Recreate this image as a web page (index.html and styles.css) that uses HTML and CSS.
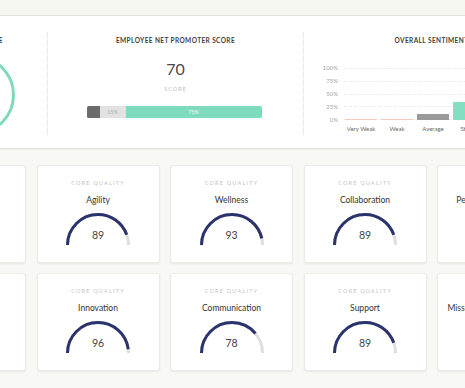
FILE: index.html
```html
<!DOCTYPE html>
<html lang="en">
<head>
<meta charset="utf-8">
<title>Culture Dashboard</title>
<link rel="stylesheet" href="styles.css">
</head>
<body>
<div class="topbar"></div>
<section class="summary">
  <div class="summary-inner">
    <div class="col col-score">
      <h3 class="col-title col-title-score">ENGAGEMENT SCORE</h3>
      <div class="ring"><span class="ring-value">82</span></div>
    </div>
    <div class="col col-nps">
      <h3 class="col-title">EMPLOYEE NET PROMOTER SCORE</h3>
      <div class="nps-value">70</div>
      <div class="nps-label">SCORE</div>
      <div class="nps-bar">
        <div class="seg seg-det" style="width:7.5%"></div>
        <div class="seg seg-pas" style="width:15%">15%</div>
        <div class="seg seg-pro" style="width:77.5%">75%</div>
      </div>
    </div>
    <div class="col col-sent">
      <h3 class="col-title">OVERALL SENTIMENT</h3>
      <div class="chart">
        <div class="y-axis">
          <span>100%</span><span>75%</span><span>50%</span><span>25%</span><span>0%</span>
        </div>
        <div class="plot-wrap">
          <div class="plot">
            <div class="gridlines"><i></i><i></i><i></i><i></i><i></i></div>
            <div class="bars">
              <div class="bar bar-weak" style="height:2%"></div>
              <div class="bar bar-weak" style="height:2%"></div>
              <div class="bar bar-avg" style="height:11%"></div>
              <div class="bar bar-strong" style="height:35%"></div>
              <div class="bar bar-strong" style="height:52%"></div>
            </div>
          </div>
          <div class="x-axis">
            <span>Very Weak</span><span>Weak</span><span>Average</span><span>Strong</span><span>Very Strong</span>
          </div>
        </div>
      </div>
    </div>
  </div>
</section>
<section class="qualities">
  <div class="card-row">
    <div class="card"><div class="kicker">CORE QUALITY</div><div class="card-title">Trust</div>
      <div class="gauge"><svg viewBox="0 0 66 33" width="66" height="33"><path class="g-track" d="M2.5,33 A30.5,30.5 0 0 1 63.5,33"/><path class="g-val" pathLength="100" stroke-dasharray="91 200" d="M2.5,33 A30.5,30.5 0 0 1 63.5,33"/></svg><span class="g-num">91</span></div></div>
    <div class="card"><div class="kicker">CORE QUALITY</div><div class="card-title">Agility</div>
      <div class="gauge"><svg viewBox="0 0 66 33" width="66" height="33"><path class="g-track" d="M2.5,33 A30.5,30.5 0 0 1 63.5,33"/><path class="g-val" pathLength="100" stroke-dasharray="89 200" d="M2.5,33 A30.5,30.5 0 0 1 63.5,33"/></svg><span class="g-num">89</span></div></div>
    <div class="card"><div class="kicker">CORE QUALITY</div><div class="card-title">Wellness</div>
      <div class="gauge"><svg viewBox="0 0 66 33" width="66" height="33"><path class="g-track" d="M2.5,33 A30.5,30.5 0 0 1 63.5,33"/><path class="g-val" pathLength="100" stroke-dasharray="93 200" d="M2.5,33 A30.5,30.5 0 0 1 63.5,33"/></svg><span class="g-num">93</span></div></div>
    <div class="card"><div class="kicker">CORE QUALITY</div><div class="card-title">Collaboration</div>
      <div class="gauge"><svg viewBox="0 0 66 33" width="66" height="33"><path class="g-track" d="M2.5,33 A30.5,30.5 0 0 1 63.5,33"/><path class="g-val" pathLength="100" stroke-dasharray="89 200" d="M2.5,33 A30.5,30.5 0 0 1 63.5,33"/></svg><span class="g-num">89</span></div></div>
    <div class="card"><div class="kicker">CORE QUALITY</div><div class="card-title">Personal Development</div>
      <div class="gauge"><svg viewBox="0 0 66 33" width="66" height="33"><path class="g-track" d="M2.5,33 A30.5,30.5 0 0 1 63.5,33"/><path class="g-val" pathLength="100" stroke-dasharray="85 200" d="M2.5,33 A30.5,30.5 0 0 1 63.5,33"/></svg><span class="g-num">85</span></div></div>
  </div>
  <div class="card-row">
    <div class="card"><div class="kicker">CORE QUALITY</div><div class="card-title">Respect</div>
      <div class="gauge"><svg viewBox="0 0 66 33" width="66" height="33"><path class="g-track" d="M2.5,33 A30.5,30.5 0 0 1 63.5,33"/><path class="g-val" pathLength="100" stroke-dasharray="90 200" d="M2.5,33 A30.5,30.5 0 0 1 63.5,33"/></svg><span class="g-num">90</span></div></div>
    <div class="card"><div class="kicker">CORE QUALITY</div><div class="card-title">Innovation</div>
      <div class="gauge"><svg viewBox="0 0 66 33" width="66" height="33"><path class="g-track" d="M2.5,33 A30.5,30.5 0 0 1 63.5,33"/><path class="g-val" pathLength="100" stroke-dasharray="96 200" d="M2.5,33 A30.5,30.5 0 0 1 63.5,33"/></svg><span class="g-num">96</span></div></div>
    <div class="card"><div class="kicker">CORE QUALITY</div><div class="card-title">Communication</div>
      <div class="gauge"><svg viewBox="0 0 66 33" width="66" height="33"><path class="g-track" d="M2.5,33 A30.5,30.5 0 0 1 63.5,33"/><path class="g-val" pathLength="100" stroke-dasharray="78 200" d="M2.5,33 A30.5,30.5 0 0 1 63.5,33"/></svg><span class="g-num">78</span></div></div>
    <div class="card"><div class="kicker">CORE QUALITY</div><div class="card-title">Support</div>
      <div class="gauge"><svg viewBox="0 0 66 33" width="66" height="33"><path class="g-track" d="M2.5,33 A30.5,30.5 0 0 1 63.5,33"/><path class="g-val" pathLength="100" stroke-dasharray="89 200" d="M2.5,33 A30.5,30.5 0 0 1 63.5,33"/></svg><span class="g-num">89</span></div></div>
    <div class="card"><div class="kicker">CORE QUALITY</div><div class="card-title">Mission &amp; Vision Alignment</div>
      <div class="gauge"><svg viewBox="0 0 66 33" width="66" height="33"><path class="g-track" d="M2.5,33 A30.5,30.5 0 0 1 63.5,33"/><path class="g-val" pathLength="100" stroke-dasharray="87 200" d="M2.5,33 A30.5,30.5 0 0 1 63.5,33"/></svg><span class="g-num">87</span></div></div>
  </div>
</section>
</body>
</html>
```

FILE: styles.css
```css
html, body {
  margin: 0;
  padding: 0;
}
body {
  background: #f8f8f4;
  font-family: Lato, "Open Sans", "Liberation Sans", sans-serif;
  color: #444;
  overflow: hidden;
  width: 465px;
  height: 388px;
}
.topbar {
  height: 15px;
  background: #f7f7f2;
}
.summary {
  background: #fff;
  border-top: 1px solid #e4e4df;
  border-bottom: 1px solid #e2e2dd;
  box-shadow: 0 1px 1px rgba(0,0,0,0.04);
  height: 134px;
  box-sizing: border-box;
  overflow: hidden;
}
.summary-inner {
  display: flex;
  margin-left: -101px;
  padding-top: 16px;
}
.col {
  flex: none;
  height: 103px;
  box-sizing: border-box;
  display: flex;
  flex-direction: column;
  align-items: center;
  padding-top: 5px;
}
.col-score {
  width: 148px;
}
.col-nps, .col-sent {
  width: 256px;
  border-left: 1px dotted #dedede;
}
.col-title {
  margin: 0;
  font-size: 6.5px;
  line-height: 8px;
  font-weight: 700;
  letter-spacing: 0.4px;
  color: #3e3e3e;
  white-space: nowrap;
}
.col-title-score {
  margin-right: 14px;
}
.ring {
  margin-top: 10px;
  margin-left: 4px;
  width: 80px;
  height: 80px;
  box-sizing: border-box;
  border: 3.5px solid #7ed9bd;
  border-radius: 50%;
  display: flex;
  align-items: center;
  justify-content: center;
}
.ring-value {
  font-size: 18px;
  color: #444;
}
.nps-value {
  margin-top: 15px;
  font-size: 16px;
  line-height: 18px;
  color: #4a4a4a;
}
.nps-label {
  margin-top: 7px;
  font-size: 5.5px;
  line-height: 8px;
  letter-spacing: 1px;
  color: #bdbdbd;
}
.nps-bar {
  margin-top: 13px;
  margin-left: -3px;
  width: 175px;
  height: 12px;
  display: flex;
  border-radius: 1.5px;
  overflow: hidden;
}
.seg {
  height: 100%;
  display: flex;
  align-items: center;
  justify-content: center;
  font-size: 5px;
  letter-spacing: 0.3px;
}
.seg-det { background: #6c6c6c; }
.seg-pas { background: #e2e2e2; color: #a9a9a9; }
.seg-pro { background: #7edbbd; color: #fff; }

.chart {
  align-self: flex-start;
  margin-left: 16px;
  margin-top: 23px;
  display: flex;
}
.y-axis {
  width: 18px;
  height: 60px;
  margin-top: -4px;
  display: flex;
  flex-direction: column;
  justify-content: space-between;
  align-items: flex-end;
  font-size: 6px;
  line-height: 8px;
  color: #a5a5a5;
}
.plot-wrap {
  margin-left: 6px;
  width: 182px;
}
.plot {
  position: relative;
  height: 52px;
}
.gridlines {
  position: absolute;
  inset: 0;
  display: flex;
  flex-direction: column;
  justify-content: space-between;
}
.gridlines i {
  display: block;
  height: 0;
  border-top: 1px dashed #ebebeb;
}
.bars {
  position: relative;
  height: 100%;
  display: flex;
  align-items: flex-end;
  gap: 4px;
  padding-left: 1px;
}
.bar {
  width: 32px;
  flex: none;
}
.bar-weak { background: #f3c9c0; height: 1px; }
.bar-avg { background: #9a9a9a; }
.bar-strong { background: #82dfc2; }
.x-axis {
  display: flex;
  gap: 4px;
  padding-left: 1px;
  margin-top: 5px;
}
.x-axis span {
  width: 32px;
  flex: none;
  text-align: center;
  white-space: nowrap;
  font-size: 6px;
  line-height: 8px;
  color: #666;
}

.qualities {
  padding-top: 16px;
  display: flex;
  flex-direction: column;
  gap: 10px;
}
.card-row {
  display: flex;
  gap: 10.5px;
  margin-left: -97px;
}
.card {
  flex: none;
  width: 123px;
  height: 98px;
  box-sizing: border-box;
  background: #fff;
  border: 1px solid #ebebe9;
  border-radius: 3px;
  box-shadow: 0 1px 2px rgba(0,0,0,0.07);
  display: flex;
  flex-direction: column;
  align-items: center;
  padding-top: 13px;
}
.kicker {
  font-size: 5.5px;
  line-height: 8px;
  letter-spacing: 1.2px;
  color: #c4c4c4;
  white-space: nowrap;
}
.card-title {
  margin-top: 9px;
  font-size: 8.5px;
  line-height: 9px;
  color: #333;
  white-space: nowrap;
}
.gauge {
  margin-top: 7px;
  display: grid;
  width: 66px;
  height: 33px;
}
.gauge svg, .g-num {
  grid-area: 1 / 1;
}
.gauge svg { display: block; }
.g-track {
  fill: none;
  stroke: #dedede;
  stroke-width: 3;
}
.g-val {
  fill: none;
  stroke: #2b336e;
  stroke-width: 3;
}
.g-num {
  align-self: end;
  justify-self: center;
  margin-bottom: 4px;
  font-size: 10.5px;
  line-height: 12px;
  color: #444;
}
```
